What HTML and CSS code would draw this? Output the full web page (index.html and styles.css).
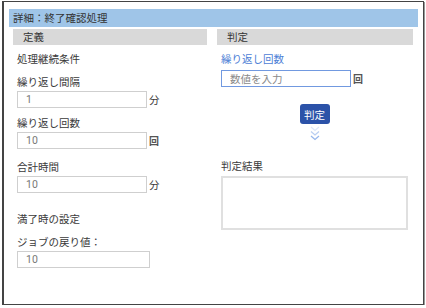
FILE: index.html
```html
<!DOCTYPE html>
<html lang="ja">
<head>
    <meta charset="UTF-8">
    <meta name="viewport" content="width=device-width, initial-scale=1.0">
    <title>詳細：終了確認処理</title>
    <link rel="stylesheet" href="styles.css">
</head>
<body>
    <div class="window">
        <div class="titlebar">詳細：終了確認処理</div>

        <div class="columns">
            <section class="col">
                <div class="col-head">定義</div>
                <div class="col-body">
                    <p class="label first">処理継続条件</p>

                    <div class="field">
                        <label class="label">繰り返し間隔</label>
                        <div class="input-row">
                            <input type="text" class="box" value="1">
                            <span class="unit">分</span>
                        </div>
                    </div>

                    <div class="field">
                        <label class="label">繰り返し回数</label>
                        <div class="input-row">
                            <input type="text" class="box" value="10">
                            <span class="unit small">回</span>
                        </div>
                    </div>

                    <div class="field wide-gap">
                        <label class="label">合計時間</label>
                        <div class="input-row">
                            <input type="text" class="box" value="10">
                            <span class="unit">分</span>
                        </div>
                    </div>

                    <p class="label section-gap">満了時の設定</p>

                    <div class="field">
                        <label class="label">ジョブの戻り値：</label>
                        <div class="input-row">
                            <input type="text" class="box long" value="10">
                        </div>
                    </div>
                </div>
            </section>

            <section class="col">
                <div class="col-head">判定</div>
                <div class="col-body">
                    <label class="label blue first">繰り返し回数</label>
                    <div class="input-row tight">
                        <input type="text" class="box active" placeholder="数値を入力">
                        <span class="unit small">回</span>
                    </div>

                    <div class="action">
                        <button class="judge">判定</button>
                        <svg class="chevrons" width="10" height="15" viewBox="0 0 10 15">
                            <polyline points="1,1 5,4.5 9,1" opacity="0.3"/>
                            <polyline points="1,5.5 5,9 9,5.5" opacity="0.6"/>
                            <polyline points="1,10 5,13.5 9,10" opacity="0.9"/>
                        </svg>
                    </div>

                    <label class="label result-label">判定結果</label>
                    <textarea class="result"></textarea>
                </div>
            </section>
        </div>
    </div>
</body>
</html>
```

FILE: styles.css
```css
body {
    margin: 0;
    font-family: "Noto Sans CJK JP", sans-serif;
    font-size: 10.5px;
    color: #3a3a3a;
    background: #fff;
}
p {
    margin: 0;
}
.window {
    box-sizing: border-box;
    width: 422px;
    height: 304px;
    margin: 1px 0 0 2px;
    padding: 7px 5px 0 5px;
    border: 1px solid #444;
    border-left-width: 2px;
    box-shadow: 1px 1px 0 #999;
    background: #fff;
}
.titlebar {
    height: 18px;
    line-height: 18px;
    padding-left: 4px;
    background-color: #9fc5e8;
    color: #333;
}
.columns {
    display: grid;
    grid-template-columns: 194px 196px;
    column-gap: 10px;
    margin-top: 2px;
    padding-left: 4px;
}
.col-head {
    height: 16px;
    line-height: 16px;
    padding-left: 10px;
    background-color: #d9d9d9;
    color: #333;
}
.col-body {
    display: flex;
    flex-direction: column;
    align-items: flex-start;
    padding-left: 4px;
}
.label {
    display: block;
    height: 16px;
    line-height: 16px;
    margin-top: 7px;
}
.label.first {
    margin-top: 6px;
}
.label.section-gap {
    margin-top: 18px;
}
.field {
    display: flex;
    flex-direction: column;
}
.field.wide-gap .label {
    margin-top: 10px;
}
.input-row {
    display: flex;
    align-items: center;
    margin-top: 1px;
}
.input-row.tight {
    margin-top: 3px;
}
.box {
    box-sizing: border-box;
    width: 130px;
    height: 17px;
    margin: 0;
    padding: 0 8px;
    border: 1px solid #cfcfcf;
    font-family: Roboto, "Noto Sans CJK JP", sans-serif;
    font-size: 10.5px;
    color: #777;
    background: #fff;
    outline: none;
}
.box.long {
    width: 133px;
}
.box.active {
    border-color: #7199e0;
    font-family: "Noto Sans CJK JP", sans-serif;
}
.box.active::placeholder {
    color: #8a8a8a;
}
.unit {
    margin-left: 2px;
    line-height: 17px;
}
.unit.small {
    font-size: 10px;
    font-weight: bold;
    color: #555;
}
.blue {
    color: #4d80d6;
}
.action {
    align-self: stretch;
    display: flex;
    flex-direction: column;
    align-items: center;
    margin-top: 17px;
    padding-right: 5px;
}
.judge {
    width: 30px;
    height: 20px;
    padding: 0;
    border: none;
    border-radius: 3px;
    background-color: #2b52a8;
    color: #fff;
    font-family: "Noto Sans CJK JP", sans-serif;
    font-size: 10.5px;
}
.chevrons {
    margin-top: 2px;
    fill: none;
    stroke: #8aaeea;
    stroke-width: 1.2;
}
.result-label {
    margin-top: 17px;
}
.result {
    box-sizing: border-box;
    width: 187px;
    height: 54px;
    margin-top: 2px;
    border: 2px solid #e0e0e0;
    resize: none;
    outline: none;
}
```
